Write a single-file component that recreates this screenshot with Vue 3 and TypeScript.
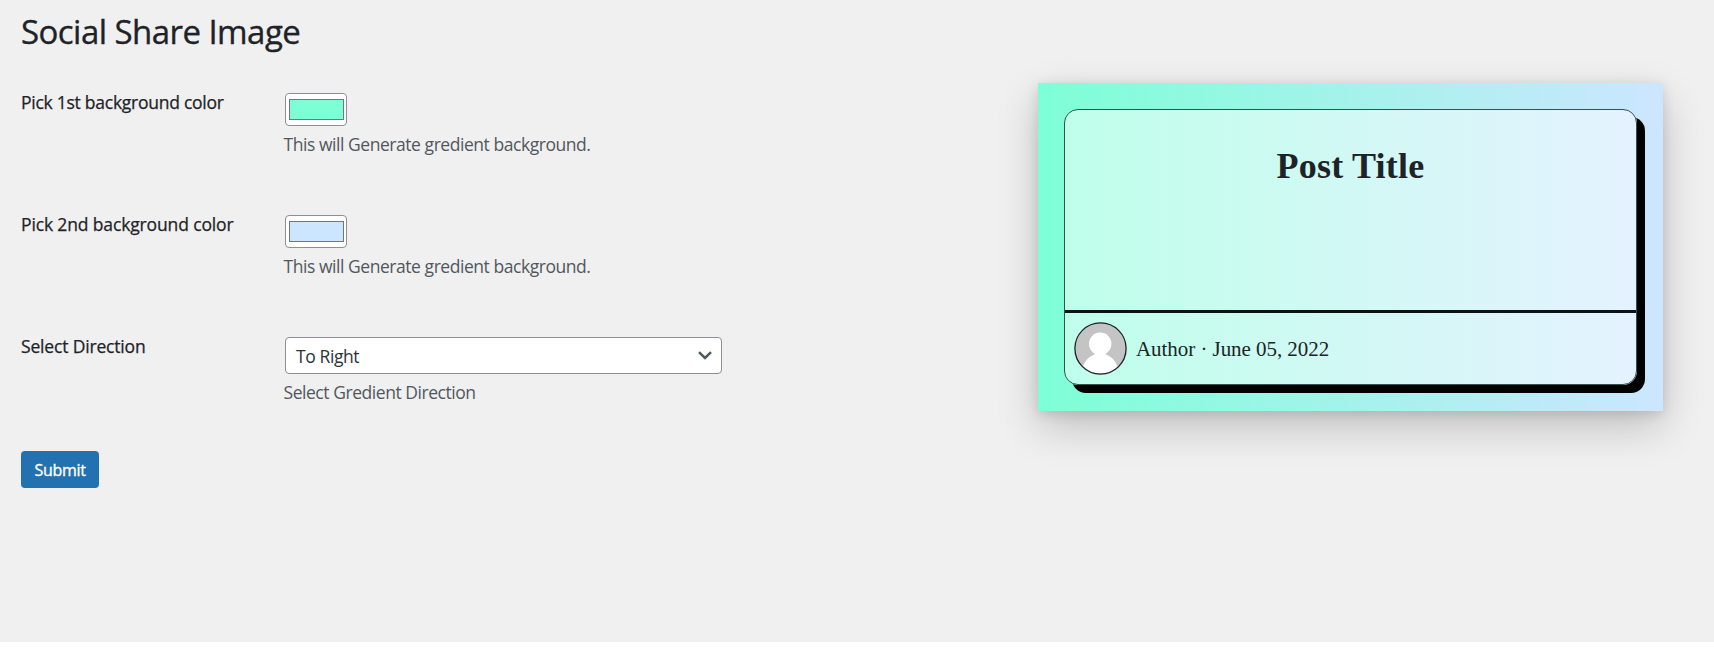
<script setup lang="ts">
import { ref } from 'vue'

interface ColorField {
  label: string
  tone: string
  hint: string
}

const colorFields: ColorField[] = [
  { label: 'Pick 1st background color', tone: 'mint', hint: 'This will Generate gredient background.' },
  { label: 'Pick 2nd background color', tone: 'sky', hint: 'This will Generate gredient background.' },
]

const direction = ref('To Right')
</script>

<template>
  <main class="page">
    <form class="settings" @submit.prevent>
      <h1 class="heading">Social Share Image</h1>

      <div v-for="field in colorFields" :key="field.tone" class="row">
        <label class="label" :class="'label-' + field.tone">{{ field.label }}</label>
        <div class="control">
          <div class="picker"><div class="swatch" :class="field.tone"></div></div>
          <p class="hint">{{ field.hint }}</p>
        </div>
      </div>

      <div class="row">
        <label class="label">Select Direction</label>
        <div class="control">
          <div class="select">
            <span>{{ direction }}</span>
            <svg class="chevron" width="14" height="9" viewBox="0 0 14 9">
              <path d="M1 1.2 L7 7 L13 1.2" fill="none" stroke="#50575e" stroke-width="2.5" />
            </svg>
          </div>
          <p class="hint">Select Gredient Direction</p>
        </div>
      </div>

      <button class="submit" type="submit">Submit</button>
    </form>

    <section class="preview">
      <article class="card">
        <h2 class="title">Post Title</h2>
        <footer class="meta">
          <svg class="avatar" width="53" height="53" viewBox="0 0 53 53">
            <defs>
              <clipPath id="round"><circle cx="26.5" cy="26.5" r="24.8" /></clipPath>
            </defs>
            <circle cx="26.5" cy="26.5" r="25.5" fill="#c4c4c4" />
            <g clip-path="url(#round)" fill="#fff">
              <circle cx="26.2" cy="21.8" r="11.2" />
              <path d="M20.5 30 H32 V33 H20.5 Z" />
              <ellipse cx="26.2" cy="50" rx="18" ry="18.5" />
            </g>
            <circle cx="26.5" cy="26.5" r="25.6" fill="none" stroke="#1d2327" stroke-width="1.3" />
          </svg>
          <span class="byline">Author · June 05, 2022</span>
        </footer>
      </article>
    </section>
  </main>
</template>

<style>
body {
  margin: 0;
  background: #fff;
}
</style>

<style scoped>
.page {
  box-sizing: border-box;
  display: flex;
  justify-content: space-between;
  height: 642px;
  padding: 0 51px 0 21px;
  overflow: hidden;
  background: #f0f0f0;
  color: #1d2327;
  font-family: 'Open Sans', 'Noto Sans', sans-serif;
}
.settings {
  width: 760px;
}
.heading {
  margin: 0 0 20px;
  padding-top: 9px;
  height: 45px;
  line-height: 45px;
  font-size: 33px;
  font-weight: 400;
  letter-spacing: -0.55px;
  white-space: nowrap;
  -webkit-text-stroke: 0.35px #1d2327;
}
.row {
  display: flex;
  height: 122px;
  box-sizing: border-box;
  padding-top: 19px;
}
.label {
  width: 263px;
  margin-top: -4px;
  line-height: 26px;
  font-size: 17.5px;
  font-weight: 400;
  letter-spacing: -0.17px;
  white-space: nowrap;
  -webkit-text-stroke: 0.25px #1d2327;
}
.label-mint {
  letter-spacing: -0.26px;
}
.label-sky {
  letter-spacing: -0.14px;
}
.control {
  padding-left: 1px;
}
.picker {
  box-sizing: border-box;
  width: 62px;
  height: 33px;
  padding: 5px 2px 5px 3px;
  border: 1px solid #8c8f94;
  border-radius: 4px;
  background: #fff;
}
.swatch {
  box-sizing: border-box;
  height: 21px;
  border: 1px solid #767676;
}
.mint {
  background: #7dffd6;
}
.sky {
  background: #cce6ff;
}
.hint {
  margin: 5px 0 0 -1.5px;
  line-height: 26px;
  font-size: 17.5px;
  font-weight: 400;
  letter-spacing: -0.45px;
  color: #50575e;
  white-space: nowrap;
}
.select {
  box-sizing: border-box;
  display: flex;
  align-items: center;
  justify-content: space-between;
  width: 437px;
  height: 37px;
  padding: 0 9px 0 10px;
  border: 1px solid #8c8f94;
  border-radius: 4px;
  background: #fff;
  color: #2c3338;
  font-size: 17.5px;
  letter-spacing: -0.4px;
}
.submit {
  display: block;
  width: 78px;
  height: 37px;
  margin-top: 11px;
  padding: 2px 0 0;
  border: 0;
  border-radius: 4px;
  background: #2271b1;
  color: #fff;
  font: 400 16px/35px 'Open Sans', sans-serif;
  letter-spacing: -0.3px;
  -webkit-text-stroke: 0.35px #fff;
}
.preview {
  box-sizing: border-box;
  width: 625px;
  height: 328px;
  margin-top: 83px;
  padding: 26px;
  background: linear-gradient(to right, #7dffd6, #cce6ff);
  box-shadow: 0 16px 40px rgba(0, 0, 0, 0.2), 0 3px 12px rgba(0, 0, 0, 0.12);
}
.card {
  box-sizing: border-box;
  display: flex;
  flex-direction: column;
  justify-content: space-between;
  width: 573px;
  height: 276px;
  border: 1px solid #35504e;
  border-radius: 14px;
  background: linear-gradient(to right, #bfffea, #e4f2ff);
  box-shadow: 8px 8px 0 #000;
  font-family: 'Liberation Serif', serif;
}
.title {
  margin: 35px 0 0;
  line-height: 42px;
  font-size: 36px;
  font-weight: 700;
  letter-spacing: 0.25px;
  text-align: center;
}
.meta {
  display: flex;
  align-items: center;
  gap: 9px;
  height: 71px;
  padding-left: 9px;
  border-top: 3px solid #0b1211;
}
.byline {
  padding-top: 2px;
  font-size: 21px;
  letter-spacing: -0.05px;
  white-space: nowrap;
}
</style>
